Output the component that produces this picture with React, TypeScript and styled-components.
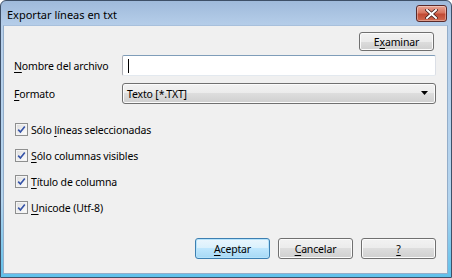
import styled, { createGlobalStyle } from 'styled-components';

const GlobalStyle = createGlobalStyle`
  html, body {
    margin: 0;
    padding: 0;
    background: #ffffff;
  }
  body {
    font-family: "Noto Sans", "Open Sans", "Liberation Sans", sans-serif;
    font-size: 10.5px;
    letter-spacing: -0.15px;
    color: #000;
  }
`;

const Window = styled.div`
  width: 452px;
  height: 278px;
  box-sizing: border-box;
  display: flex;
  flex-direction: column;
  border: 1px solid #3e5068;
  border-radius: 6px 6px 0 0;
  background: linear-gradient(to bottom, #9fbadb 0px, #b7cfea 26px, #b3d4ee 200px, #5fc0ea 277px);
  overflow: hidden;
`;

const TitleBar = styled.div`
  height: 24px;
  display: flex;
  align-items: flex-start;
  justify-content: space-between;
  padding: 4px 4px 0 6px;
  box-sizing: border-box;
`;

const TitleText = styled.div`
  font-size: 11px;
  letter-spacing: 0;
  line-height: 16px;
  color: #000;
  margin-top: 2px;
`;

const CloseButton = styled.div`
  width: 31px;
  height: 17px;
  box-sizing: border-box;
  border: 1px solid #5a2a2a;
  border-radius: 3px;
  background: linear-gradient(to bottom, #e8a494 0%, #d8755f 45%, #c14a34 55%, #d06a50 100%);
  box-shadow: inset 0 0 0 1px rgba(255, 255, 255, 0.35);
  display: flex;
  align-items: center;
  justify-content: center;
`;

const Body = styled.div`
  flex: 1;
  margin: 0 3px 3px 2px;
  background: #f0f0f0;
  border: 1px solid #93adc9;
  border-top-color: #a8c0dc;
  display: flex;
  flex-direction: column;
  padding: 6px 10px 0 10px;
`;

const BrowseRow = styled.div`
  display: flex;
  justify-content: flex-end;
  padding-right: 3px;
`;

const Button = styled.div<{ $default?: boolean; $w?: number; $h?: number }>`
  width: ${p => p.$w ?? 75}px;
  height: ${p => p.$h ?? 21}px;
  box-sizing: border-box;
  border: 1px solid ${p => (p.$default ? '#3c7fb1' : '#707070')};
  border-radius: 3px;
  background: ${p =>
    p.$default
      ? 'linear-gradient(to bottom, #eaf6fd 0%, #d9f0fc 50%, #bee6fd 50%, #a7d9f5 100%)'
      : 'linear-gradient(to bottom, #f2f2f2 0%, #ebebeb 50%, #dddddd 50%, #cfcfcf 100%)'};
  box-shadow: inset 0 0 0 1px ${p => (p.$default ? '#b6e3fb' : '#fbfbfb')};
  display: flex;
  align-items: center;
  justify-content: center;
  line-height: 14px;
`;

const Key = styled.span`
  text-decoration: underline;
  text-underline-offset: 2px;
`;

const FieldRow = styled.div<{ $mt: number }>`
  display: flex;
  align-items: center;
  margin-top: ${p => p.$mt}px;
`;

const Label = styled.div`
  width: 108px;
  white-space: nowrap;
`;

const TextInput = styled.div`
  width: 314px;
  height: 21px;
  box-sizing: border-box;
  background: #fff;
  border: 1px solid #abadb3;
  border-top-color: #7f9db9;
  border-right-color: #dbdfe6;
  border-bottom-color: #e3e9ef;
  border-radius: 2px;
  display: flex;
  align-items: center;
  padding-left: 5px;
`;

const Caret = styled.div`
  width: 1px;
  height: 14px;
  background: #000;
`;

const Select = styled.div`
  width: 314px;
  height: 21px;
  box-sizing: border-box;
  border: 1px solid #707070;
  border-radius: 3px;
  background: linear-gradient(to bottom, #f2f2f2 0%, #ebebeb 50%, #dddddd 50%, #cfcfcf 100%);
  box-shadow: inset 0 0 0 1px #fbfbfb;
  display: flex;
  align-items: center;
  justify-content: space-between;
  padding: 0 6px 0 4px;
`;

const Checks = styled.div`
  display: flex;
  flex-direction: column;
  gap: 13px;
  margin-top: 19px;
  padding-left: 1px;
`;

const CheckRow = styled.div`
  display: flex;
  align-items: center;
  gap: 3px;
  height: 13px;
  white-space: nowrap;
`;

const Box = styled.div`
  width: 13px;
  height: 13px;
  box-sizing: border-box;
  border: 1px solid #8e8f8f;
  background: linear-gradient(135deg, #dcdcdc 0%, #f4f4f4 70%, #ffffff 100%);
  box-shadow: inset 0 0 0 1px #f4f4f4;
  display: flex;
  align-items: center;
  justify-content: center;
`;

const Footer = styled.div`
  margin-top: auto;
  margin-bottom: 14px;
  display: flex;
  justify-content: flex-end;
  gap: 8px;
  padding-right: 1px;
`;

function CheckBox({ children }: { children: React.ReactNode }) {
  return (
    <CheckRow>
      <Box>
        <svg width="9" height="9" viewBox="0 0 9 9">
          <path d="M1.2 4.6 L3.4 7 L7.8 1.4" fill="none" stroke="#3553a8" strokeWidth="1.6" />
        </svg>
      </Box>
      <span>{children}</span>
    </CheckRow>
  );
}

export default function App() {
  return (
    <>
      <GlobalStyle />
      <Window>
        <TitleBar>
          <TitleText>Exportar líneas en txt</TitleText>
          <CloseButton>
            <svg width="13" height="10" viewBox="0 0 13 10">
              <path d="M2 1 L11 9 M11 1 L2 9" stroke="#3a1a1a" strokeWidth="3.4" strokeLinecap="square" />
              <path d="M2 1 L11 9 M11 1 L2 9" stroke="#ffffff" strokeWidth="2" strokeLinecap="square" />
            </svg>
          </CloseButton>
        </TitleBar>
        <Body>
          <BrowseRow>
            <Button $h={19}>
              <span>
                E<Key>x</Key>aminar
              </span>
            </Button>
          </BrowseRow>
          <FieldRow $mt={4}>
            <Label>
              <Key>N</Key>ombre del archivo
            </Label>
            <TextInput>
              <Caret />
            </TextInput>
          </FieldRow>
          <FieldRow $mt={7}>
            <Label>
              <Key>F</Key>ormato
            </Label>
            <Select>
              <span>Texto [*.TXT]</span>
              <svg width="8" height="5" viewBox="0 0 8 5">
                <path d="M0 0 H7 L3.5 4 Z" fill="#000" />
              </svg>
            </Select>
          </FieldRow>
          <Checks>
            <CheckBox>
              Sólo <Key>l</Key>íneas seleccionadas
            </CheckBox>
            <CheckBox>
              <Key>S</Key>ólo columnas visibles
            </CheckBox>
            <CheckBox>
              <Key>T</Key>ítulo de columna
            </CheckBox>
            <CheckBox>
              <Key>U</Key>nicode (Utf-8)
            </CheckBox>
          </Checks>
          <Footer>
            <Button $default>
              <span>
                <Key>A</Key>ceptar
              </span>
            </Button>
            <Button>
              <span>
                <Key>C</Key>ancelar
              </span>
            </Button>
            <Button>
              <Key>?</Key>
            </Button>
          </Footer>
        </Body>
      </Window>
    </>
  );
}
